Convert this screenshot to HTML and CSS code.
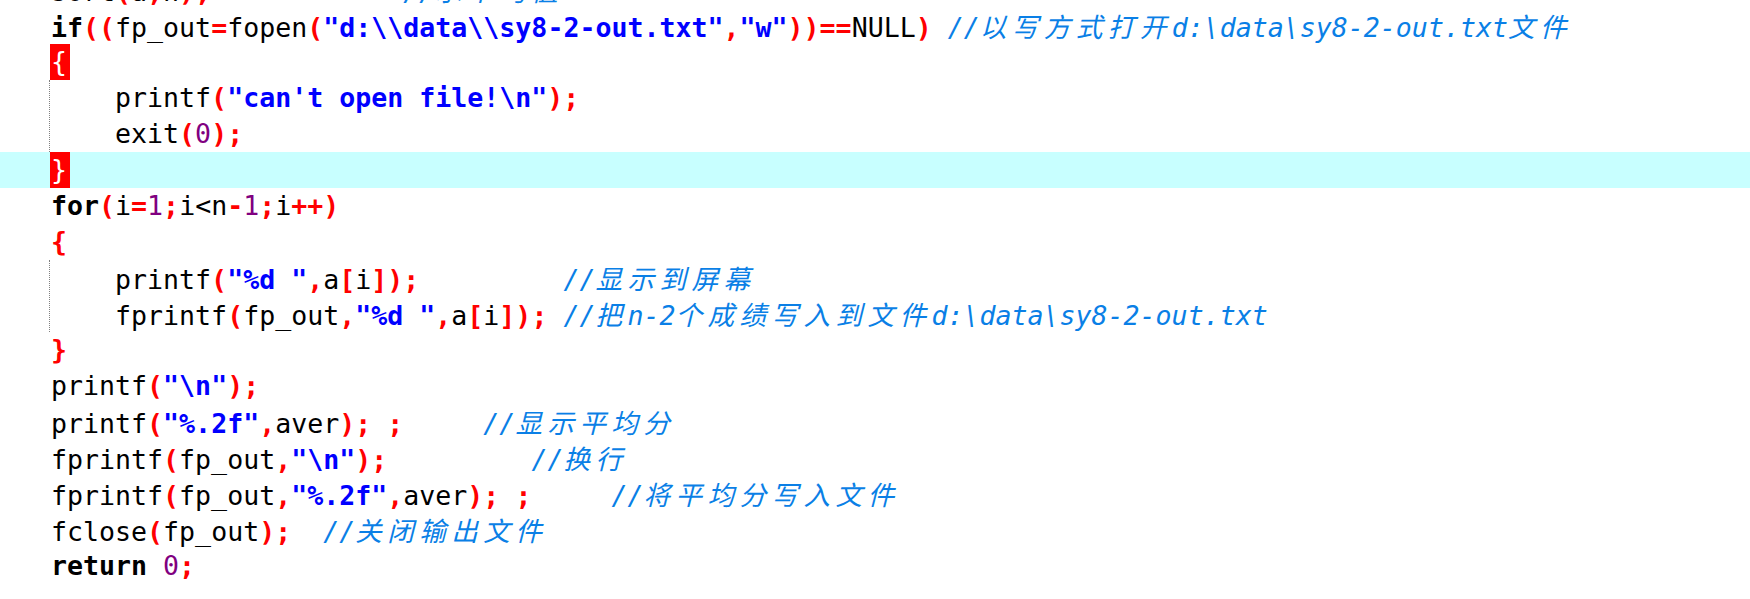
FILE: index.html
```html
<!DOCTYPE html>
<html lang="zh-CN">
<head>
<meta charset="utf-8">
<title>sy8-2.c</title>
<link rel="stylesheet" href="styles.css">
</head>
<body>
<div class="editor">
<div class="line">sort<span class="op">(</span>a<span class="op">,</span>n<span class="op">);</span>            <span class="cm">//<span class="zh">求平均值</span></span></div>
<div class="line"><span class="kw">if</span><span class="op">((</span>fp_out<span class="op">=</span>fopen<span class="op">(</span><span class="str">"d:\\data\\sy8-2-out.txt"</span><span class="op">,</span><span class="str">"w"</span><span class="op">))==</span>NULL<span class="op">)</span> <span class="cm">//<span class="zh">以写方式打开</span>d:\data\sy8-2-out.txt<span class="zh">文件</span></span></div>
<div class="line"><span class="match">{</span></div>
<div class="block">
<div class="line">    printf<span class="op">(</span><span class="str">"can't open file!\n"</span><span class="op">);</span></div>
<div class="line">    exit<span class="op">(</span><span class="num">0</span><span class="op">);</span></div>
</div>
<div class="line current"><span class="match">}</span></div>
<div class="line"><span class="kw">for</span><span class="op">(</span>i<span class="op">=</span><span class="num">1</span><span class="op">;</span>i&lt;n<span class="op">-</span><span class="num">1</span><span class="op">;</span>i<span class="op">++)</span></div>
<div class="line"><span class="op">{</span></div>
<div class="block">
<div class="line">    printf<span class="op">(</span><span class="str">"%d "</span><span class="op">,</span>a<span class="op">[</span>i<span class="op">]);</span>         <span class="cm">//<span class="zh">显示到屏幕</span></span></div>
<div class="line">    fprintf<span class="op">(</span>fp_out<span class="op">,</span><span class="str">"%d "</span><span class="op">,</span>a<span class="op">[</span>i<span class="op">]);</span> <span class="cm">//<span class="zh">把</span>n-2<span class="zh">个成绩写入到文件</span>d:\data\sy8-2-out.txt</span></div>
</div>
<div class="line"><span class="op">}</span></div>
<div class="line">printf<span class="op">(</span><span class="str">"\n"</span><span class="op">);</span></div>
<div class="line">printf<span class="op">(</span><span class="str">"%.2f"</span><span class="op">,</span>aver<span class="op">);</span> <span class="op">;</span>     <span class="cm">//<span class="zh">显示平均分</span></span></div>
<div class="line">fprintf<span class="op">(</span>fp_out<span class="op">,</span><span class="str">"\n"</span><span class="op">);</span>         <span class="cm">//<span class="zh">换行</span></span></div>
<div class="line">fprintf<span class="op">(</span>fp_out<span class="op">,</span><span class="str">"%.2f"</span><span class="op">,</span>aver<span class="op">);</span> <span class="op">;</span>     <span class="cm">//<span class="zh">将平均分写入文件</span></span></div>
<div class="line">fclose<span class="op">(</span>fp_out<span class="op">);</span>  <span class="cm">//<span class="zh">关闭输出文件</span></span></div>
<div class="line"><span class="kw">return</span> <span class="num">0</span><span class="op">;</span></div>
</div>
</body>
</html>
```
FILE: styles.css
```css
html, body {
  margin: 0;
  padding: 0;
  background: #ffffff;
  overflow: hidden;
}

.editor {
  margin-top: -28px;
  font-family: "DejaVu Sans Mono", "Noto Sans CJK SC", monospace;
  font-size: 26.6px;
  color: #000000;
}

.line {
  height: 36px;
  line-height: 36px;
  white-space: pre;
  padding-left: 51px;
}

.block {
  margin-left: 49px;
  border-left: 1px dotted #808080;
}

.block .line {
  padding-left: 1px;
}

.current {
  background: #c8ffff;
}

.kw {
  font-weight: bold;
  color: #000000;
}

.op {
  font-weight: bold;
  color: #ff0000;
}

.str {
  font-weight: bold;
  color: #0000ff;
}

.num {
  color: #800080;
}

.cm {
  font-style: italic;
  color: #0a7fe6;
}

.zh {
  font-family: "Noto Sans CJK SC", sans-serif;
  letter-spacing: 5.4px;
}

.match {
  display: inline-block;
  height: 36px;
  vertical-align: top;
  background: #ff0000;
  color: #ffffff;
  padding: 0 3px 0 1px;
  margin: 0 -3px 0 -1px;
}
```
